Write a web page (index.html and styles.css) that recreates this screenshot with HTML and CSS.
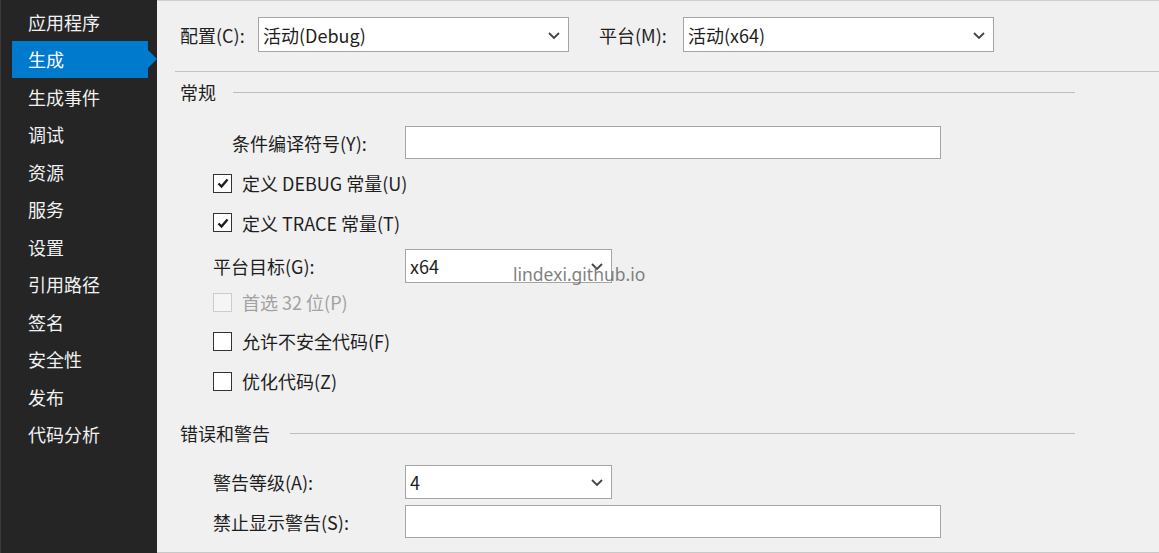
FILE: index.html
```html
<!DOCTYPE html>
<html lang="zh-CN">
<head>
<meta charset="utf-8">
<title>生成</title>
<link rel="stylesheet" href="styles.css">
</head>
<body>
<nav class="sidebar">
  <div class="nav-item">应用程序</div>
  <div class="nav-item active">生成</div>
  <div class="nav-item">生成事件</div>
  <div class="nav-item">调试</div>
  <div class="nav-item">资源</div>
  <div class="nav-item">服务</div>
  <div class="nav-item">设置</div>
  <div class="nav-item">引用路径</div>
  <div class="nav-item">签名</div>
  <div class="nav-item">安全性</div>
  <div class="nav-item">发布</div>
  <div class="nav-item">代码分析</div>
</nav>
<main class="main">
  <div class="top-row">
    <span class="top-label">配置(C):</span>
    <div class="select wide">活动(Debug)<svg class="chev" viewBox="0 0 12 7"><polyline points="1,1 6,6 11,1"/></svg></div>
    <span class="top-label second">平台(M):</span>
    <div class="select wide">活动(x64)<svg class="chev" viewBox="0 0 12 7"><polyline points="1,1 6,6 11,1"/></svg></div>
  </div>
  <div class="hr"></div>

  <div class="section-head"><span>常规</span><div class="line"></div></div>

  <div class="row r-text">
    <span class="label label-indent">条件编译符号(Y):</span>
    <div class="textbox"></div>
  </div>
  <div class="row r-cb1">
    <span class="cb checked"><svg viewBox="0 0 16 16"><polyline points="3.5,8.5 6.5,11.5 12.5,4.5"/></svg></span>
    <span>定义 DEBUG 常量(U)</span>
  </div>
  <div class="row r-cb2">
    <span class="cb checked"><svg viewBox="0 0 16 16"><polyline points="3.5,8.5 6.5,11.5 12.5,4.5"/></svg></span>
    <span>定义 TRACE 常量(T)</span>
  </div>
  <div class="row r-sel">
    <span class="label">平台目标(G):</span>
    <div class="select narrow">x64<svg class="chev" viewBox="0 0 12 7"><polyline points="1,1 6,6 11,1"/></svg></div>
  </div>
  <div class="row r-cb3 disabled">
    <span class="cb"></span>
    <span>首选 32 位(P)</span>
  </div>
  <div class="row r-cb4">
    <span class="cb"></span>
    <span>允许不安全代码(F)</span>
  </div>
  <div class="row r-cb5">
    <span class="cb"></span>
    <span>优化代码(Z)</span>
  </div>

  <div class="section-head second-head"><span>错误和警告</span><div class="line"></div></div>

  <div class="row r-sel2">
    <span class="label">警告等级(A):</span>
    <div class="select narrow">4<svg class="chev" viewBox="0 0 12 7"><polyline points="1,1 6,6 11,1"/></svg></div>
  </div>
  <div class="row r-text2">
    <span class="label">禁止显示警告(S):</span>
    <div class="textbox"></div>
  </div>

  <div class="watermark">lindexi.github.io</div>
</main>
</body>
</html>
```
FILE: styles.css
```css
* { box-sizing: border-box; }

html, body {
  margin: 0;
  height: 553px;
  overflow: hidden;
}

body {
  display: flex;
  font-family: "Noto Sans CJK SC", "Noto Sans", sans-serif;
  font-size: 18px;
  color: #1e1e1e;
  background: #f0f0f0;
}

.sidebar {
  width: 157px;
  flex: none;
  background: #252526;
  border-left: 1px solid #3a3a3c;
  padding-top: 3px;
  height: 553px;
}

.nav-item {
  position: relative;
  height: 37.5px;
  margin-left: 11px;
  width: 136px;
  padding-left: 16px;
  display: flex;
  align-items: center;
  color: #f1f1f1;
  font-size: 18px;
}

.nav-item.active {
  background: #007acc;
  color: #ffffff;
}

.nav-item.active::after {
  content: "";
  position: absolute;
  right: -9px;
  top: 50%;
  margin-top: -9px;
  border-top: 9px solid transparent;
  border-bottom: 9px solid transparent;
  border-left: 9px solid #007acc;
}

.main {
  position: relative;
  flex: 1;
  height: 553px;
  border-top: 1px solid #cfcfcf;
  border-bottom: 1px solid #c8c8c8;
  padding-left: 18px;
}

.top-row {
  display: flex;
  align-items: center;
  margin-top: 16px;
  padding-left: 5px;
  height: 35px;
}

.top-label {
  width: 78px;
  flex: none;
}

.top-label.second {
  margin-left: 30px;
  width: 84px;
}

.select {
  position: relative;
  display: flex;
  align-items: center;
  background: #ffffff;
  border: 1px solid #a5a5a5;
  padding-left: 4px;
  height: 35px;
}

.select.wide { width: 311px; }
.select.narrow { width: 207px; height: 34px; }

.chev {
  position: absolute;
  right: 8px;
  top: 50%;
  width: 12px;
  height: 7px;
  margin-top: -3px;
  fill: none;
  stroke: #444444;
  stroke-width: 1.8;
}

.hr {
  margin-top: 19px;
  height: 1px;
  background: #c4c4c4;
}

.section-head {
  display: flex;
  align-items: center;
  height: 24px;
  margin-top: 8px;
  padding-left: 5px;
  margin-right: 84px;
}

.section-head .line {
  flex: 1;
  height: 1px;
  background: #bdbdbd;
  margin-left: 17px;
}

.second-head { margin-top: 20px; }
.second-head .line { margin-left: 20px; }

.row {
  display: flex;
  align-items: center;
  padding-left: 38px;
}

.label {
  width: 192px;
  flex: none;
}

.label.label-indent {
  padding-left: 19px;
}

.textbox {
  width: 536px;
  height: 33px;
  background: #ffffff;
  border: 1px solid #a5a5a5;
}

.r-text { margin-top: 22px; height: 33px; }
.r-cb1 { height: 40px; margin-top: 4px; }
.r-cb2 { height: 39px; }
.r-sel { margin-top: 7px; height: 34px; }
.r-cb3 { height: 38px; }
.r-cb4 { height: 40px; }
.r-cb5 { height: 40px; }
.r-sel2 { margin-top: 20px; height: 34px; }
.r-text2 { margin-top: 6px; height: 33px; }

.cb {
  width: 19px;
  height: 19px;
  flex: none;
  background: #ffffff;
  border: 1px solid #333333;
  margin-right: 10px;
  display: flex;
  align-items: center;
  justify-content: center;
}

.cb svg {
  width: 16px;
  height: 16px;
  fill: none;
  stroke: #1e1e1e;
  stroke-width: 2.4;
}

.disabled { color: #a2a2a2; }
.disabled .cb { border-color: #cccccc; background: #f5f5f5; }

.watermark {
  position: absolute;
  left: 356px;
  top: 261px;
  font-family: "Noto Sans", sans-serif;
  font-size: 17.5px;
  color: #6c6c6c;
  opacity: 0.85;
  pointer-events: none;
}
```
